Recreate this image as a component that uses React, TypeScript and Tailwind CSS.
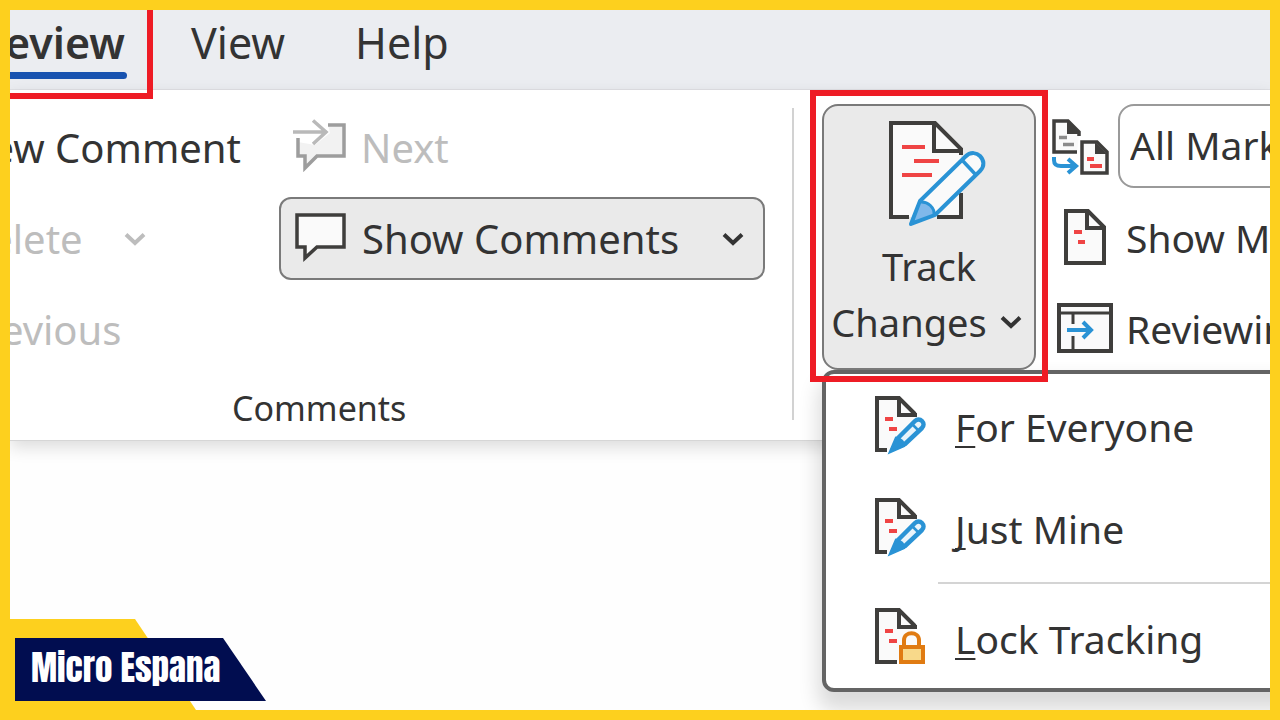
import type { ReactNode } from "react";

type IconProps = { className?: string };

const INK = "#3f3e3c";
const BLUE = "#2a93d5";
const RED = "#ef4444";

function Chevron({ className = "" }: IconProps) {
  return (
    <svg width="24" height="16" viewBox="0 0 24 16" fill="none" stroke="currentColor" strokeWidth="4" className={className} aria-hidden="true">
      <path d="M3 3.5 L12 12 L21 3.5" />
    </svg>
  );
}

function NextIcon() {
  return (
    <svg width="58" height="60" viewBox="0 0 58 60" fill="none" stroke="#9d9d9d" strokeWidth="3.5" aria-hidden="true">
      <path d="M7 24 L24 27 L39 15 L37 7 H53 V38 H26 L14 50 V38 H7 Z" fill="#f2f2f2" stroke="none" />
      <path d="M7 20 V38 H14 V50 L26 38 H53 V7 H37" />
      <path d="M2 14 H36 M22 2.500 L35 14 L22 26" stroke="#b9b9b9" />
    </svg>
  );
}

function CommentIcon() {
  return (
    <svg width="58" height="56" viewBox="0 0 58 56" fill="#fafafa" stroke={INK} strokeWidth="3.5" aria-hidden="true">
      <path d="M5 4 H52 V36 H25 L13 47 V36 H5 Z" />
    </svg>
  );
}

function TrackChangesIcon() {
  return (
    <svg width="100" height="110" viewBox="0 0 100 110" fill="none" className="ml-4" aria-hidden="true">
      <path d="M4 5 H48 L74 31 V99 H4 Z" fill="#fafafa" />
      <path d="M22 99 H4 V5 H48 L74 31 V37 M74 75 V99 H50" stroke={INK} strokeWidth="4" />
      <path d="M47 5 V33 H75" stroke={INK} strokeWidth="4" />
      <path d="M15 29 H38 M27 43 H52 M15 57 H45" stroke={RED} strokeWidth="4" />
      <path d="M24 106 L33 83 L78 39 C84 33 90 35 93 38 C97 42 98 48 93 53 L48 97 Z" fill="#fafafa" stroke={BLUE} strokeWidth="4" strokeLinejoin="round" />
      <path d="M25 105 L33 84 C41 83 48 90 47 97 Z" fill="#7fb8ea" stroke={BLUE} strokeWidth="3" />
      <path d="M75 42 L89 57" stroke={BLUE} strokeWidth="3.5" />
    </svg>
  );
}

function CompareIcon() {
  return (
    <svg width="68" height="64" viewBox="0 0 68 64" fill="none" aria-hidden="true">
      <path d="M27 36 H4 V5 H18 L29 16 V20" fill="#fafafa" stroke={INK} strokeWidth="3.5" />
      <path d="M17 4 V18 H30 Z" fill={INK} />
      <path d="M9 21.500 H17 M13 28.500 H24" stroke="#8b8b8b" strokeWidth="3.5" />
      <path d="M32 26 H47 L57 36 V57 H32 Z" fill="#fafafa" stroke={INK} strokeWidth="3.5" />
      <path d="M45 26 V38 H57 Z" fill={INK} />
      <path d="M37 43 H44 M40 50 H52" stroke={RED} strokeWidth="4" />
      <path d="M4 41 V44 C4 49 7 50 11 50 H26 M18 43 L26 50 L18 57" stroke={BLUE} strokeWidth="4" />
    </svg>
  );
}

function MarkupIcon() {
  return (
    <svg width="68" height="64" viewBox="0 0 68 64" fill="none" aria-hidden="true">
      <path d="M16 4 H38 L54 20 V56 H16 Z" fill="#fafafa" stroke={INK} strokeWidth="4" />
      <path d="M37 4 V21 H54" stroke={INK} strokeWidth="4" />
      <path d="M24 25 H32 M28 35 H35" stroke={RED} strokeWidth="4" />
    </svg>
  );
}

function PaneIcon() {
  return (
    <svg width="68" height="64" viewBox="0 0 68 64" fill="none" aria-hidden="true">
      <rect x="9" y="7" width="52" height="46" fill="#fafafa" stroke={INK} strokeWidth="4" />
      <path d="M9 15 H61 M23 15 V26 M23 38 V53" stroke={INK} strokeWidth="3" />
      <path d="M17 32 H41 M33 24 L41 32 L33 40" stroke={BLUE} strokeWidth="4" />
    </svg>
  );
}

function SmallPage({ children, base }: { children: ReactNode; base: number }) {
  return (
    <svg width="56" height="66" viewBox="0 0 56 66" fill="none" className="shrink-0" aria-hidden="true">
      <path d="M4 4 H26 L43 21 L24 56 H4 Z" fill="#fafafa" />
      <path d={`M${base} 56 H4 V4 H26 L42 20`} stroke={INK} strokeWidth="4" />
      <path d="M26 4 V21 H44" stroke={INK} strokeWidth="4" />
      <path d="M12 25 H20 M16 35 H24" stroke={RED} strokeWidth="4" />
      {children}
    </svg>
  );
}

function PagePencilIcon() {
  return (
    <SmallPage base={14}>
      <path d="M20 55 L25 44 L42 27 C44 25 47 25 49 27 C51 29 51 32 49 34 L32 50 Z" fill="#e9f4fb" stroke={BLUE} strokeWidth="4.5" strokeLinejoin="round" />
      <path d="M17 58 L23 44 C28 45 31 48 31 52 Z M38 29 L46 37" fill={BLUE} stroke={BLUE} strokeWidth="2.5" />
    </SmallPage>
  );
}

function PageLockIcon() {
  return (
    <SmallPage base={24}>
      <path d="M31 41 V34 C31 25 46 25 46 34 V41" fill="#fafafa" stroke="#e07b12" strokeWidth="4" />
      <rect x="28" y="41" width="22" height="15" fill="#f8d98a" stroke="#e07b12" strokeWidth="4" />
    </SmallPage>
  );
}

const menuItem = "flex h-[94px] w-full items-center pl-[47px] text-left";
const accessKey = "decoration-2 underline-offset-4 [text-decoration-skip-ink:none]";

function TrackMenu() {
  return (
    <div role="menu" className="absolute top-full left-0 w-[520px] rounded-xl border-4 border-[#646464] bg-white pt-[6px] pb-[2px] text-[39px] shadow-[0_14px_20px_4px_rgba(0,0,0,0.14)]">
      <div className="flex flex-col gap-2">
        <button role="menuitem" className={menuItem}>
          <PagePencilIcon />
          <span className="ml-[26px]"><u className={accessKey}>F</u>or Everyone</span>
        </button>
        <button role="menuitem" className={menuItem}>
          <PagePencilIcon />
          <span className="ml-[26px]"><u className={accessKey}>J</u>ust Mine</span>
        </button>
      </div>
      <hr className="mt-[6px] mb-2 ml-28 border-t-2 border-[#d4d4d4]" />
      <button role="menuitem" className={menuItem}>
        <PageLockIcon />
        <span className="ml-[26px]"><u className={accessKey}>L</u>ock Tracking</span>
      </button>
    </div>
  );
}

function Tabs() {
  return (
    <nav className="flex h-20 border-b border-[#e0e1e5] bg-[#ebedf1] text-[43px] leading-[66px]">
      <div className="relative -ml-8 w-[149px] shrink-0">
        <a href="#review" className="flex h-full flex-col items-end pr-[2px] font-semibold">
          Review
          <span className="absolute top-[62px] right-0 h-[7px] w-full rounded-full bg-[#1853b0]" />
        </a>
        <span className="pointer-events-none absolute -top-4 -right-[26px] -bottom-[10px] -left-4 z-10 border-[6px] border-[#ee1c25]" />
      </div>
      <a href="#view" className="ml-16 shrink-0">View</a>
      <a href="#help" className="ml-[70px] shrink-0">Help</a>
    </nav>
  );
}

function CommentsGroup() {
  return (
    <section className="flex w-[782px] shrink-0 flex-col pt-3">
      <div className="flex">
        <div className="-ml-[49px] flex w-[318px] shrink-0 flex-col whitespace-nowrap">
          <button className="h-[91px] text-left">New Comment</button>
          <button disabled className="flex h-[91px] items-center text-[#bdbdbd]">
            Delete
            <Chevron className="ml-10" />
          </button>
          <button disabled className="h-[91px] text-left text-[#bdbdbd]">Previous</button>
        </div>
        <div className="flex w-[486px] flex-col">
          <button disabled className="flex h-[91px] items-center pl-3 text-[#bdbdbd]">
            <NextIcon />
            <span className="ml-3">Next</span>
          </button>
          <button aria-pressed="true" className="my-1 flex h-[83px] items-center rounded-xl border-2 border-[#7a7a7a] bg-[#eaeaea] pl-[11px]">
            <CommentIcon />
            <span className="ml-3">Show Comments</span>
            <Chevron className="mr-[18px] ml-auto" />
          </button>
        </div>
      </div>
      <h2 className="mt-auto pl-[222px] text-[34px] leading-[66px]">Comments</h2>
    </section>
  );
}

function TrackingGroup() {
  return (
    <section className="flex pl-[28px]">
      <div className="relative mt-[14px] h-[266px] w-[214px] shrink-0">
        <TrackMenu />
        <button aria-haspopup="menu" aria-expanded="true" className="relative flex h-full w-full flex-col items-center rounded-2xl border-2 border-[#7a7a7a] bg-[#eaeaea] pt-3 text-[38px] leading-14">
          <TrackChangesIcon />
          <span className="mt-[10px]">Track</span>
          <span className="flex items-center gap-3 pr-1">
            Changes
            <Chevron />
          </span>
        </button>
        <span className="pointer-events-none absolute -inset-x-3 -top-[14px] -bottom-3 border-[6px] border-[#ee1c25]" />
      </div>
      <div className="ml-[14px] flex shrink-0 flex-col pt-3 text-[39px] whitespace-nowrap">
        <label className="flex h-[91px] items-center">
          <CompareIcon />
          <select aria-label="Display for review" className="mb-1 h-[84px] w-[320px] appearance-none rounded-2xl border-2 border-[#9a9a9a] bg-white pl-[10px]">
            <option>All Markup</option>
          </select>
        </label>
        <button className="flex h-[91px] items-center gap-2">
          <MarkupIcon />
          Show Markup
        </button>
        <button className="flex h-[91px] items-center gap-2">
          <PaneIcon />
          Reviewing Pane
        </button>
      </div>
    </section>
  );
}

function Brand() {
  return (
    <footer className="absolute bottom-0 left-0">
      <div className="h-[91px] w-[186px] bg-[#fdd01e] [clip-path:polygon(0_0,125px_0,100%_100%,0_100%)]" />
      <p className="absolute bottom-[9px] left-[5px] h-[63px] w-[251px] bg-[#010d50] pl-4 font-['Anton','Liberation_Sans_Narrow','DejaVu_Sans_Condensed',sans-serif] text-[35px] leading-[60px] whitespace-nowrap text-white [clip-path:polygon(0_0,208px_0,100%_100%,0_100%)]">
        Micro Espana
      </p>
    </footer>
  );
}

export default function App() {
  return (
    <div className="flex h-screen bg-[#fdd01e] p-[10px] font-['Noto_Sans','Open_Sans',sans-serif] text-[#333333]">
      <main className="relative min-w-0 flex-1 overflow-hidden bg-[#fefefe]">
        <Tabs />
        <div className="flex h-[351px] border-b border-[#d6d6d6] bg-white text-[40px] shadow-[0_6px_16px_rgba(0,0,0,0.14)]">
          <CommentsGroup />
          <div className="mt-[18px] mb-5 w-[2px] shrink-0 bg-[#d2d2d2]" />
          <TrackingGroup />
        </div>
        <Brand />
      </main>
    </div>
  );
}
